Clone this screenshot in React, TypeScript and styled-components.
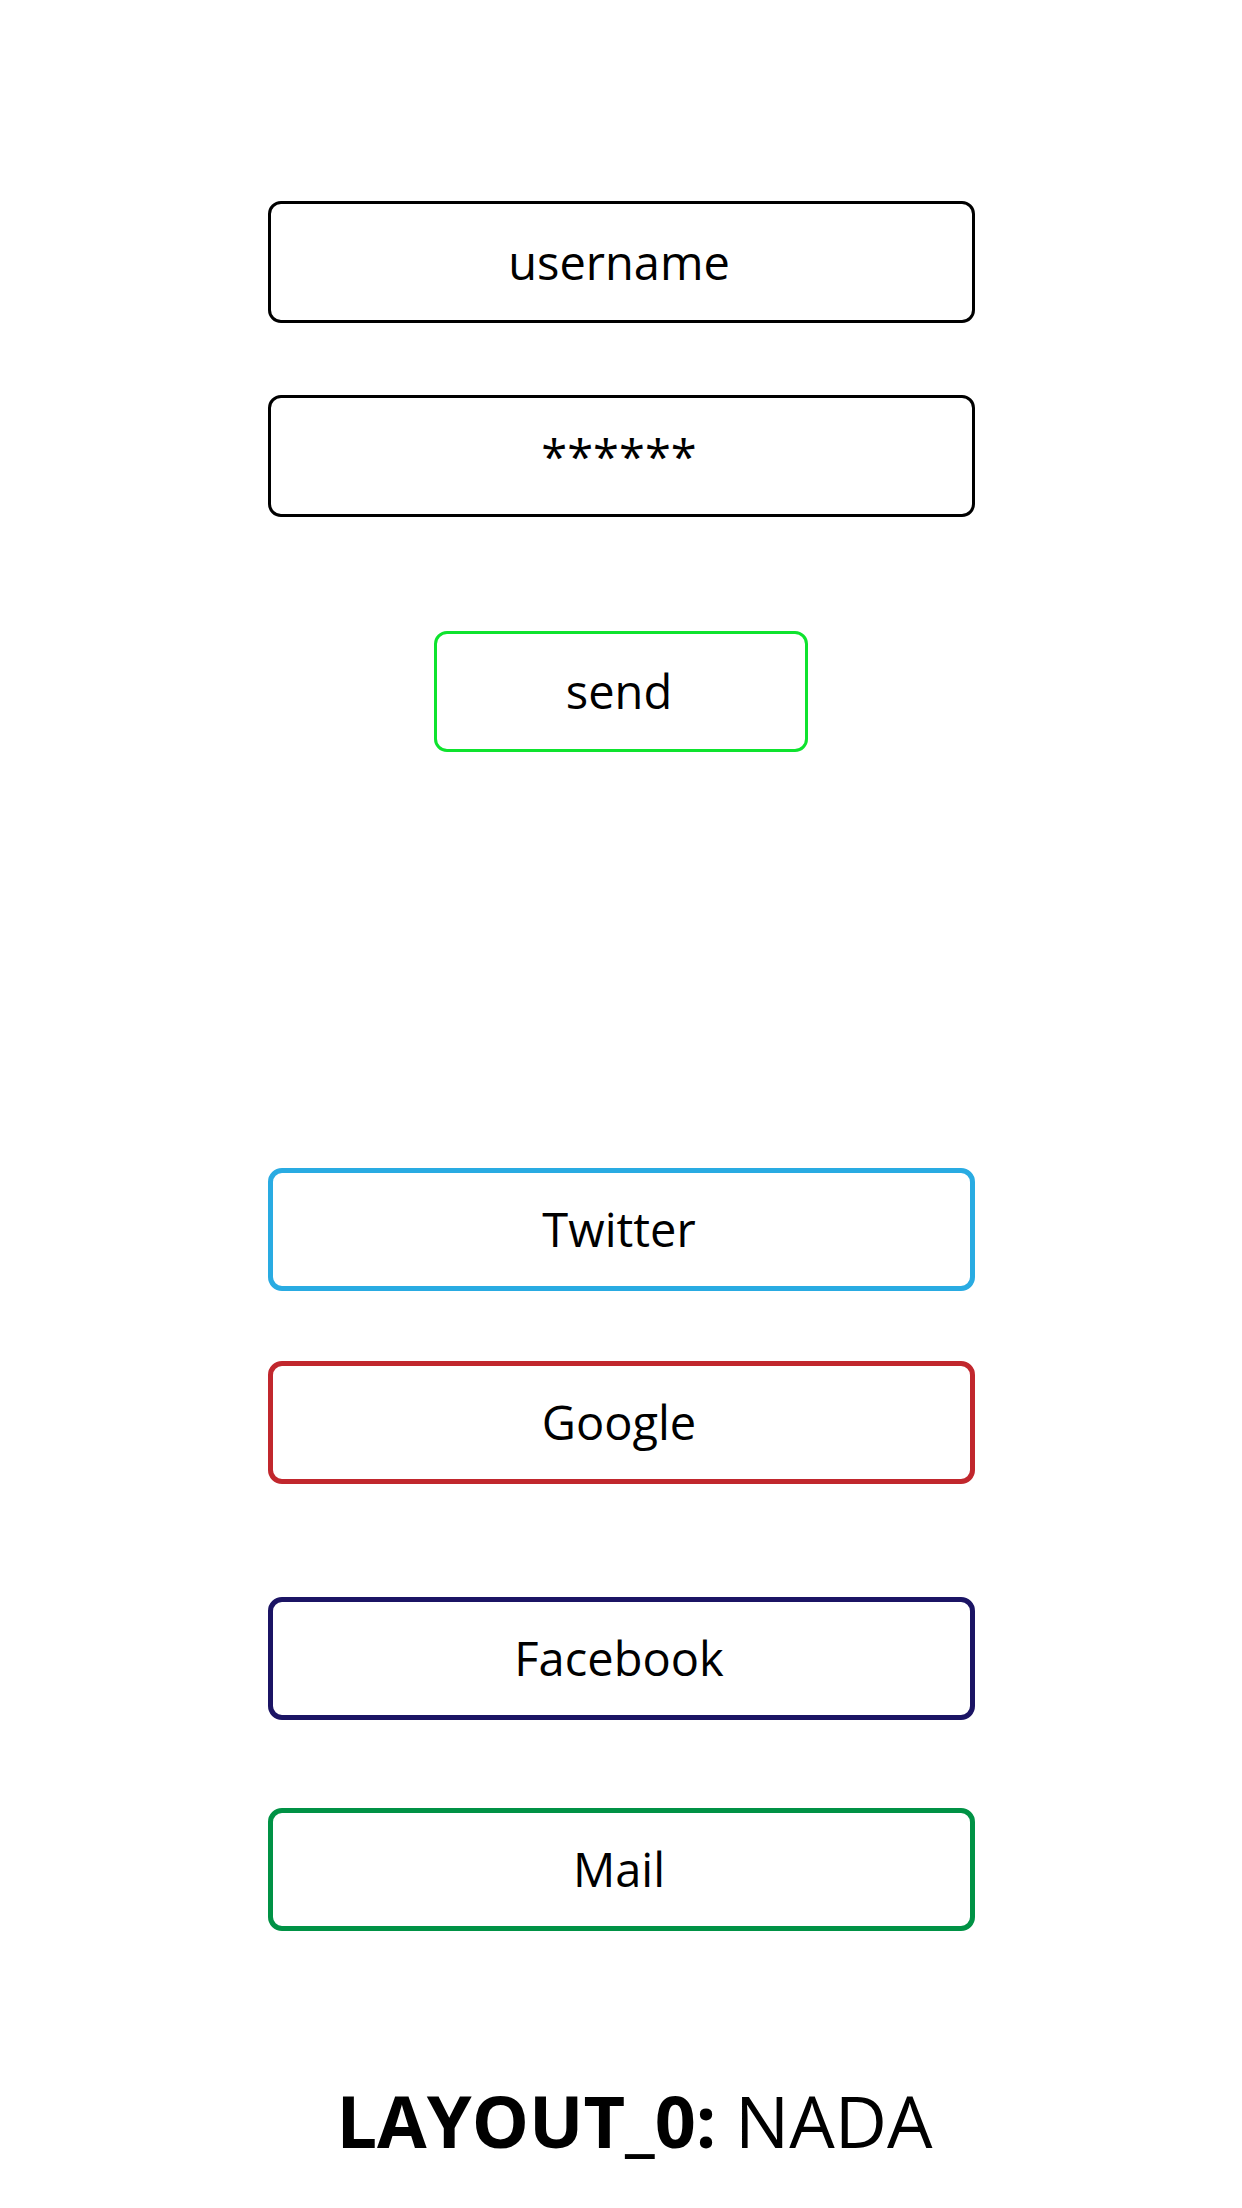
import React from "react";
import styled, { createGlobalStyle } from "styled-components";

const GlobalStyle = createGlobalStyle`
  html, body {
    margin: 0;
    padding: 0;
    background: #ffffff;
  }
  body {
    font-family: "Open Sans", "Noto Sans", "Liberation Sans", sans-serif;
    color: #000000;
  }
`;

const Page = styled.main`
  display: flex;
  flex-direction: column;
  align-items: center;
  padding-top: 201px;
  width: 1242px;
  box-sizing: border-box;
`;

const LoginForm = styled.form`
  display: flex;
  flex-direction: column;
  align-items: center;
  width: 707px;
`;

const Field = styled.div<{ $gap?: number }>`
  display: flex;
  align-items: center;
  justify-content: center;
  box-sizing: border-box;
  width: 707px;
  height: 122px;
  margin-top: ${(p) => p.$gap ?? 0}px;
  padding: 0 4px 0 0;
  border: 3px solid #000000;
  border-radius: 13px;
  font-size: 47px;
  line-height: 1;
  color: #000000;
`;

const SendButton = styled.button`
  display: flex;
  align-items: center;
  justify-content: center;
  box-sizing: border-box;
  width: 374px;
  height: 121px;
  margin-top: 114px;
  padding: 0 4px 0 0;
  background: #ffffff;
  border: 3px solid #0ee32e;
  border-radius: 13px;
  font-family: inherit;
  font-size: 47px;
  line-height: 1;
  color: #000000;
`;

const SocialList = styled.div`
  display: flex;
  flex-direction: column;
  align-items: center;
  margin-top: 416px;
  width: 707px;
`;

const SocialButton = styled.button<{ $color: string; $gap: number }>`
  display: flex;
  align-items: center;
  justify-content: center;
  box-sizing: border-box;
  width: 707px;
  height: 123px;
  margin-top: ${(p) => p.$gap}px;
  padding: 0 4px 0 0;
  background: #ffffff;
  border: 5px solid ${(p) => p.$color};
  border-radius: 14px;
  font-family: inherit;
  font-size: 47px;
  line-height: 1;
  color: #000000;
`;

const Caption = styled.p`
  margin: 140px 0 0 0;
  padding-left: 27px;
  font-size: 72px;
  line-height: normal;
  color: #000000;
  white-space: nowrap;
`;

const Strong = styled.strong`
  font-weight: 700;
`;

const socials = [
  { label: "Twitter", color: "#29abe2", gap: 0 },
  { label: "Google", color: "#c1272d", gap: 70 },
  { label: "Facebook", color: "#1b1464", gap: 113 },
  { label: "Mail", color: "#009245", gap: 88 },
];

export default function App() {
  return (
    <>
      <GlobalStyle />
      <Page>
        <LoginForm onSubmit={(e) => e.preventDefault()}>
          <Field>username</Field>
          <Field $gap={72}>******</Field>
          <SendButton type="submit">send</SendButton>
        </LoginForm>
        <SocialList>
          {socials.map((s) => (
            <SocialButton key={s.label} type="button" $color={s.color} $gap={s.gap}>
              {s.label}
            </SocialButton>
          ))}
        </SocialList>
        <Caption>
          <Strong>LAYOUT_0:</Strong> NADA
        </Caption>
      </Page>
    </>
  );
}
